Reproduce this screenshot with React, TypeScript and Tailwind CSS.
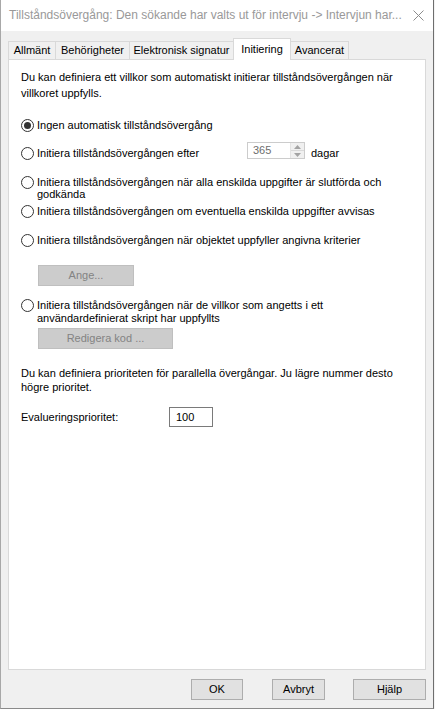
import React from "react";

function Radio({ checked, className = "" }: { checked?: boolean; className?: string }) {
  return (
    <div
      className={
        "w-[13px] h-[13px] rounded-full border border-[#333333] bg-white flex items-center justify-center shrink-0 " +
        className
      }
    >
      {checked && <div className="w-[7px] h-[7px] rounded-full bg-[#333333]" />}
    </div>
  );
}

function Tab({ label, w, selected, first }: { label: string; w: string; selected?: boolean; first?: boolean }) {
  if (selected) {
    return (
      <div
        className={
          w +
          " relative z-10 -ml-[1px] h-[22px] -mb-[1px] border-t border-l border-r border-[#d9d9d9] bg-white text-center pt-[3px] leading-[14px] text-black"
        }
      >
        {label}
      </div>
    );
  }
  return (
    <div
      className={
        w +
        (first ? "" : " -ml-[1px]") +
        " h-[18px] border-t border-l border-r border-[#d9d9d9] bg-[#f0f0f0] text-center pt-[1px] leading-[14px] text-black"
      }
    >
      {label}
    </div>
  );
}

export default function App() {
  return (
    <div className="w-[435px] h-[709px] bg-[#f3f3f3] font-['Liberation_Sans',Arial,sans-serif] text-[11px] text-black overflow-hidden">
      <div className="w-[434px] h-[709px] border-l border-r border-b border-l-[#a8a8a8] border-r-[#6e6e6e] border-b-[#8a8a8a] bg-[#f0f0f0] flex flex-col">
        {/* Title bar */}
        <div className="h-[31px] bg-white flex items-center justify-between pl-[8px] pr-[8px] shrink-0">
          <div className="text-[12px] leading-[31px] text-[#999999] whitespace-nowrap">
            Tillståndsövergång: Den sökande har valts ut för intervju -&gt; Intervjun har...
          </div>
          <svg width="11" height="11" viewBox="0 0 11 11" className="mr-[1px] shrink-0">
            <path d="M0.5 0.5 L10.5 10.5 M10.5 0.5 L0.5 10.5" stroke="#8c8c8c" strokeWidth="1" fill="none" />
          </svg>
        </div>

        {/* Tabs */}
        <div className="h-[28px] flex items-end pl-[7px] shrink-0">
          <Tab label="Allmänt" w="w-[48px]" first />
          <Tab label="Behörigheter" w="w-[75px]" />
          <Tab label="Elektronisk signatur" w="w-[105px]" />
          <Tab label="Initiering" w="w-[58px]" selected />
          <Tab label="Avancerat" w="w-[59px]" />
        </div>

        {/* Panel */}
        <div className="ml-[7px] w-[418px] h-[611px] border border-[#d9d9d9] bg-white pl-[12px] flex flex-col shrink-0">
          <div className="mt-[9px] leading-[16px]">
            Du kan definiera ett villkor som automatiskt initierar tillståndsövergången när
            <br />
            villkoret uppfylls.
          </div>

          <div className="mt-[16px] h-[16px] flex items-start">
            <Radio checked className="mt-[2px]" />
            <span className="ml-[3px] leading-[16px]">Ingen automatisk tillståndsövergång</span>
          </div>

          <div className="mt-[9px] h-[20px] flex items-start">
            <div className="w-[226px] flex items-start mt-[3px]">
              <Radio className="mt-[2px]" />
              <span className="ml-[3px] leading-[16px]">Initiera tillståndsövergången efter</span>
            </div>
            <div className="w-[58px] h-[17px] border border-[#cccccc] bg-white flex">
              <div className="flex-1 pl-[5px] leading-[15px] text-[#6d6d6d]">365</div>
              <div className="w-[14px] h-full flex flex-col border-l border-[#e3e3e3]">
                <div className="flex-1 flex items-center justify-center bg-[#f0f0f0] border-b border-[#d9d9d9]">
                  <svg width="7" height="4" viewBox="0 0 7 4">
                    <path d="M0 4 L3.5 0 L7 4 Z" fill="#a3a3a3" />
                  </svg>
                </div>
                <div className="flex-1 flex items-center justify-center bg-[#f0f0f0]">
                  <svg width="7" height="4" viewBox="0 0 7 4">
                    <path d="M0 0 L3.5 4 L7 0 Z" fill="#a3a3a3" />
                  </svg>
                </div>
              </div>
            </div>
            <span className="ml-[6px] mt-[3px] leading-[16px]">dagar</span>
          </div>

          <div className="mt-[14px] flex items-start">
            <Radio className="mt-0" />
            <span className="ml-[3px] leading-[12px]">
              Initiera tillståndsövergången när alla enskilda uppgifter är slutförda och
              <br />
              godkända
            </span>
          </div>

          <div className="mt-[5px] flex items-start">
            <Radio />
            <span className="ml-[3px] leading-[12px]">Initiera tillståndsövergången om eventuella enskilda uppgifter avvisas</span>
          </div>

          <div className="mt-[16px] flex items-start">
            <Radio />
            <span className="ml-[3px] leading-[12px]">Initiera tillståndsövergången när objektet uppfyller angivna kriterier</span>
          </div>

          <div className="mt-[18px] ml-[17px] w-[96px] h-[21px] border border-[#bfbfbf] bg-[#cccccc] text-[#838383] flex items-center justify-center">
            Ange...
          </div>

          <div className="mt-[13px] flex items-start">
            <Radio />
            <span className="ml-[3px] leading-[13px]">
              Initiera tillståndsövergången när de villkor som angetts i ett
              <br />
              användardefinierat skript har uppfyllts
            </span>
          </div>

          <div className="mt-[3px] ml-[17px] w-[135px] h-[21px] border border-[#bfbfbf] bg-[#cccccc] text-[#838383] flex items-center justify-center">
            Redigera kod ...
          </div>

          <div className="mt-[17px] leading-[14px]">
            Du kan definiera prioriteten för parallella övergångar. Ju lägre nummer desto
            <br />
            högre prioritet.
          </div>

          <div className="mt-[13px] h-[20px] flex items-center">
            <span className="w-[148px] leading-[14px]">Evalueringsprioritet:</span>
            <div className="w-[44px] h-[20px] border border-[#7a7a7a] bg-white pl-[6px] leading-[18px]">100</div>
          </div>
        </div>

        {/* Buttons */}
        <div className="mt-[9px] h-[21px] flex pl-[190px] shrink-0">
          <div className="w-[52px] h-[21px] border border-[#adadad] bg-[#e1e1e1] flex items-center justify-center">OK</div>
          <div className="ml-[29px] w-[53px] h-[21px] border border-[#adadad] bg-[#e1e1e1] flex items-center justify-center">Avbryt</div>
          <div className="ml-[28px] w-[73px] h-[21px] border border-[#adadad] bg-[#e1e1e1] flex items-center justify-center">Hjälp</div>
        </div>
      </div>
    </div>
  );
}
